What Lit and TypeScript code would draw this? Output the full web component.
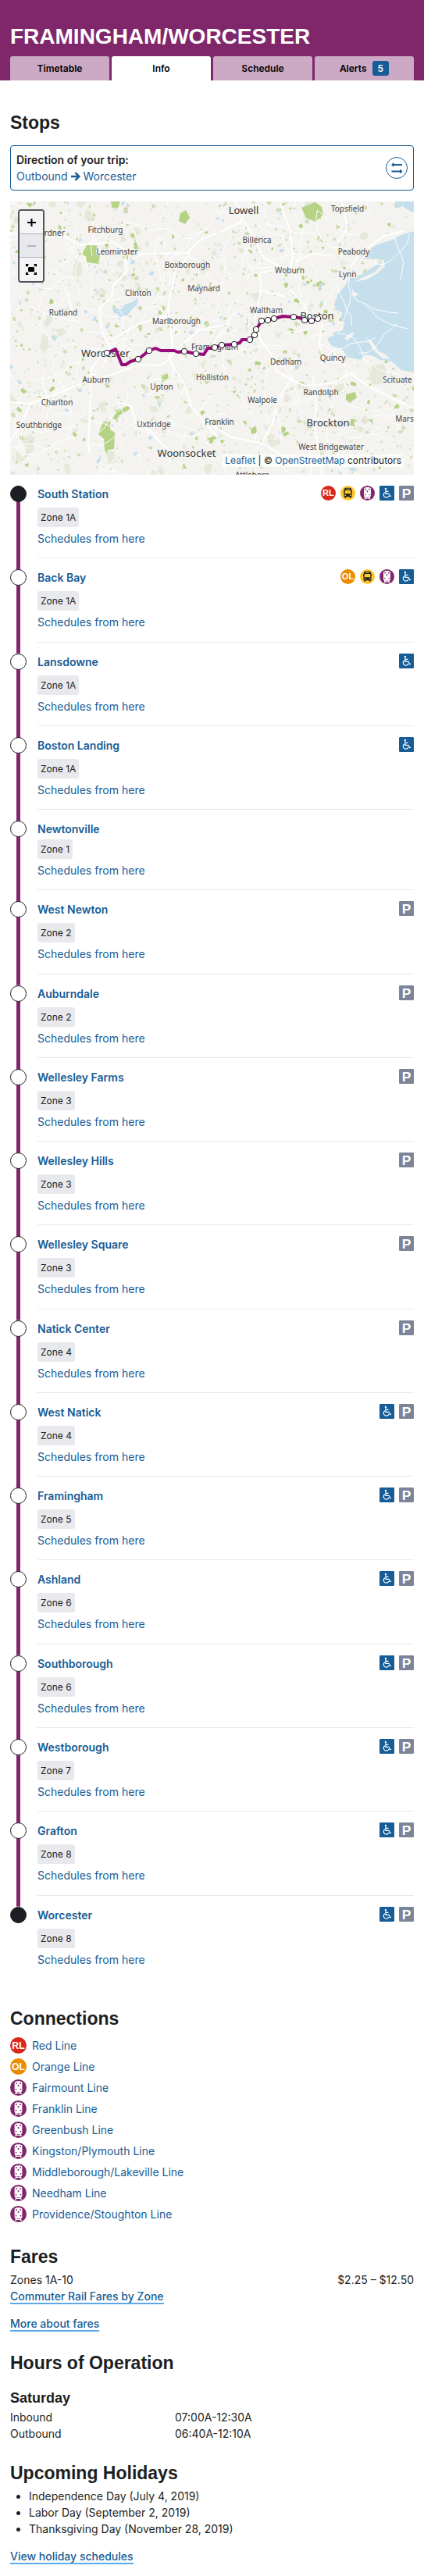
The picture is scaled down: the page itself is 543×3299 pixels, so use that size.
import { LitElement, html, svg, css } from "lit";
import { customElement } from "lit/decorators.js";

type Icon = "RL" | "OL" | "bus" | "cr" | "access" | "parking";

const stops: { name: string; zone: string; icons: Icon[] }[] = [
  { name: "South Station", zone: "1A", icons: ["RL", "bus", "cr", "access", "parking"] },
  { name: "Back Bay", zone: "1A", icons: ["OL", "bus", "cr", "access"] },
  { name: "Lansdowne", zone: "1A", icons: ["access"] },
  { name: "Boston Landing", zone: "1A", icons: ["access"] },
  { name: "Newtonville", zone: "1", icons: [] },
  { name: "West Newton", zone: "2", icons: ["parking"] },
  { name: "Auburndale", zone: "2", icons: ["parking"] },
  { name: "Wellesley Farms", zone: "3", icons: ["parking"] },
  { name: "Wellesley Hills", zone: "3", icons: ["parking"] },
  { name: "Wellesley Square", zone: "3", icons: ["parking"] },
  { name: "Natick Center", zone: "4", icons: ["parking"] },
  { name: "West Natick", zone: "4", icons: ["access", "parking"] },
  { name: "Framingham", zone: "5", icons: ["access", "parking"] },
  { name: "Ashland", zone: "6", icons: ["access", "parking"] },
  { name: "Southborough", zone: "6", icons: ["access", "parking"] },
  { name: "Westborough", zone: "7", icons: ["access", "parking"] },
  { name: "Grafton", zone: "8", icons: ["access", "parking"] },
  { name: "Worcester", zone: "8", icons: ["access", "parking"] },
];

const connections: [Icon, string][] = [
  ["RL", "Red Line"],
  ["OL", "Orange Line"],
  ["cr", "Fairmount Line"],
  ["cr", "Franklin Line"],
  ["cr", "Greenbush Line"],
  ["cr", "Kingston/Plymouth Line"],
  ["cr", "Middleborough/Lakeville Line"],
  ["cr", "Needham Line"],
  ["cr", "Providence/Stoughton Line"],
];

const iconLabels: Record<Icon, string> = {
  RL: "Red Line",
  OL: "Orange Line",
  bus: "Bus",
  cr: "Commuter Rail",
  access: "Accessible",
  parking: "Parking",
};

const iconArt = {
  RL: svg`<circle cx="12" cy="12" r="12" fill="#da291c"/><text x="12" y="17" class="letters">RL</text>`,
  OL: svg`<circle cx="12" cy="12" r="12" fill="#ed8b00"/><text x="12" y="17" class="letters">OL</text>`,
  bus: svg`<circle cx="12" cy="12" r="12" fill="#ffc72c"/>
    <path fill="#1c1e23" fill-rule="evenodd" d="M9 3.500h6c1.600 0 2.400.8 2.700 2.300l.3 1.700.9.500v3.500h-.7l.2 2.500v4h-1.200V20h-2.400v-2H9.200v2H6.800v-2H5.600v-4l.2-2.500h-.7V8l.9-.5.3-1.700C6.600 4.300 7.400 3.500 9 3.500zM9 4.800v1.100h6V4.800zM7.300 7.600 6.900 13h10.200l-.4-5.400zM6.700 14.700v1.600h2.300v-1.600zM15 14.700v1.600h2.300v-1.600z"/>`,
  cr: svg`<circle cx="12" cy="12" r="12" fill="#80276c"/>
    <path fill="#fff" fill-rule="evenodd" d="M9 2.600h6l.6.9h1.200l.8 1.200v12l-1.200 1.800h-.8l1.700 3.200h-1.900l-.5-1H9.100l-.5 1H6.700l1.700-3.200h-.8l-1.200-1.800v-12l.8-1.200h1.200zM8.100 4.800v2h1.900v-2zM14 4.800v2h1.900v-2zM12 7.600l-1.500 1.400L12 10.700l1.500-1.700zM7.700 13.800v1.700h1.700v-1.700zM14.600 13.800v1.700h1.700v-1.700zM10 18.500l-.4.900h4.800l-.4-.9z"/>`,
  access: svg`<rect width="24" height="24" rx="1.500" fill="#165c96"/>
    <circle cx="10" cy="5" r="1.500" fill="#fff"/>
    <path d="M10 6.500v6.500h5.200l2 4.400 1.700-.9M10.200 9.300h4.300M8.800 11a4.400 4.400 0 1 0 6.300 5.500" fill="none" stroke="#fff" stroke-width="1.500"/>`,
  parking: svg`<rect width="24" height="24" rx="1.500" fill="#7c8498"/><text x="12" y="20" class="park">P</text>`,
};

const icon = (name: Icon) =>
  html`<svg class="icon" viewBox="0 0 24 24" role="img" aria-label=${iconLabels[name]}>${iconArt[name]}</svg>`;

/* Basemap: land cover patches are scattered from a fixed seed so that every render is the same. */
const seeded = (seed: number) => () => {
  seed = (seed * 1664525 + 1013904223) % 4294967296;
  return seed / 4294967296;
};

const patches = (seed: number, count: number, min: number, max: number) => {
  const rnd = seeded(seed);
  let d = "";
  for (let i = 0; i < count; i++) {
    const x = rnd() * 517;
    const y = rnd() * 350;
    const r = min + rnd() * rnd() * (max - min);
    const n = 7;
    for (let k = 0; k < n; k++) {
      const a = (k / n) * Math.PI * 2;
      const q = r * (0.4 + rnd());
      d += `${k ? "L" : "M"}${(x + Math.cos(a) * q).toFixed(1)} ${(y + Math.sin(a) * q).toFixed(1)}`;
    }
    d += "Z";
  }
  return d;
};

const lanes = (seed: number, count: number) => {
  const rnd = seeded(seed);
  let d = "";
  for (let i = 0; i < count; i++) {
    let x = rnd() * 517;
    let y = rnd() * 350;
    let a = rnd() * 6.28;
    d += `M${x.toFixed(1)} ${y.toFixed(1)}`;
    for (let k = 0; k < 6; k++) {
      a += (rnd() - 0.5) * 1.1;
      x += Math.cos(a) * 11;
      y += Math.sin(a) * 11;
      d += `L${x.toFixed(1)} ${y.toFixed(1)}`;
    }
  }
  return d;
};

const towns: [string, number, number][] = [
  ["ardner", 54, 44], ["Fitchburg", 122, 40], ["Leominster", 137, 68], ["Boxborough", 227, 85],
  ["Clinton", 164, 121], ["Maynard", 248, 115], ["Rutland", 68, 146], ["Marlborough", 213, 157],
  ["Framingham", 262, 190], ["Auburn", 110, 232], ["Upton", 194, 241], ["Holliston", 259, 229],
  ["Charlton", 60, 261], ["Southbridge", 37, 290], ["Uxbridge", 184, 289], ["Franklin", 268, 286],
  ["Billerica", 316, 53], ["Topsfield", 432, 13], ["Peabody", 440, 68], ["Lynn", 432, 97],
  ["Woburn", 358, 92], ["Waltham", 328, 143], ["Dedham", 353, 209], ["Quincy", 413, 204],
  ["Scituate", 496, 232], ["Randolph", 398, 248], ["Walpole", 323, 258], ["Mars", 505, 282],
  ["West Bridgewater", 411, 318], ["Attleboro", 310, 354],
];
const cities: [string, number, number][] = [
  ["Lowell", 299, 16], ["Worcester", 122, 199], ["Boston", 393, 151],
  ["Woonsocket", 226, 327], ["Brockton", 407, 288],
];
const pins = [
  [124, 194], [164, 202], [178, 191], [223, 192], [238, 195], [262, 187], [271, 184], [287, 183],
  [307, 177], [313, 171], [315, 164], [322, 153], [330, 152], [338, 150], [363, 148], [377, 152],
  [386, 153], [394, 150],
];

const basemap = svg`
  <rect width="517" height="350" fill="#f4f3f0"/>
  <path d=${patches(9, 190, 2, 9)} fill="#e6e9da"/>
  <path d=${patches(31, 520, 0.8, 4)} fill="#cfdcb5"/>
  <path d=${patches(7, 300, 0.8, 5)} fill="#b6d285"/>
  <path d=${patches(77, 300, 0.6, 3.5)} fill="#c6dfed"/>
  <path d=${patches(55, 50, 1, 4)} fill="#efe6d2"/>
  <g fill="#b6d285">
    <path d="M98 55l14 2-2 8 5 3-2 12-15-2-1-8-6-2z"/>
    <path d="M129 0h12l-3 9-8-2zM218 15l7-4 5 9-6 9-8-4zM373 8l18-7 8 6 2 10-10 9-12-5z"/>
    <path d="M119 282h9v10l6 4-1 21-12 2-1-15-7-6z"/>
    <path d="M134 268l19-7v5l-15 9zM193 223l8-4 2 7-8 6zM308 291l8-4 1 9-8 2zM430 247l12-3 2 7-9 7-5-4z"/>
  </g>
  <g fill="#e4e9dc">
    <path d="M84 74l7 3 1 15-8 8-4-7zM41 170l7 2 1 14-6 9-5-8zM463 210l14-2 5 6v17l-16 4-6-8zM124 319l10 2 1 14-10 1z"/>
  </g>
  <path d="M163 123l-5 5-11 4-4 6-12-3 1 7 7 3v7l5-5 6-1 7-9 6-5z" fill="#c6dfed"/>
  <path d="M517 38l-19 6-8 5-20 6-14 9-3 10 15-1 10 3-18 11-12 8-14 3-5 10-9 10-5 14 3 7 7 3-2 8 5 5-2 10-14 3-6 9 6 8 14 5 6 9 17 4 5-7 11 2 9 5 15 2 12 11 18 3z" fill="#c6dfed"/>
  <path d="M493 0h24v14l-9-4-5-4-10 3z" fill="#c6dfed"/>
  <path d="M452 97l14-6 8-8 4-10 2 10-11 10-13 7-16 3zM436 101l3 14 8 4-8 3zM408 169l5-3 2 5-5 3zM418 162l8-3-5 9zM428 175l11-8 2 2-9 9zM456 174l8 6 8 12 9 4 6 6-10-1-12-11z" fill="#f4f3f0"/>
  <path d=${lanes(12, 150)} class="lane"/>
  <g class="road">
    <path d="M0 41l40 4 29-1 19 12 45-4 14 10 2 28-17 18-2 14-15 14 1 25 8 18 5 12-8 15"/>
    <path d="M137 68l45-1 45-1 18-18 20-7"/>
    <path d="M231 66l-20 25-4 20-5 25 4 30 2 20-5 14 7 14 12 18 10 30 20 25 14 15"/>
    <path d="M0 257l26 2 34-13 44-18 27-6 33-13 24 1 10-3 20-22 24-20 40-9"/>
    <path d="M26 259l-13 28-13 20M138 257l18 6 4 20 20 11 13 16 22 18"/>
    <path d="M118 195l-14 20-2 60-2 35 2 14M131 177l18-11 20-11 30-8"/>
    <path d="M270 39l29-15 16 28 10 20 18 10M296 30l2-16-10-14M345 0l14 38 3 35-4 12-38 6"/>
    <path d="M320 92l1 22-8 40 8 22 15 23 5 18 35 19 37-3 22-13 24 17 60 29 25 25"/>
    <path d="M388 224l4 40-2 22 10 64M362 225l-20 30-6 30-14 25M258 286l25 16 40 8 34 20 60 2M322 114l30 8M400 156l-4 25 5 21M386 158l-9-25-18-20M365 77l22-10 26 3M436 84l14-20 30-20 25-6M425 0l7 34-12 18"/>
  </g>
  <g class="town">${towns.map(([t, x, y]) => svg`<text x=${x} y=${y}>${t}</text>`)}</g>
  <g class="city">${cities.map(([t, x, y]) => svg`<text x=${x} y=${y}>${t}</text>`)}</g>
  <path class="route" d="M124 194 135 189 143 209H148L154 205 164 202 178 191 186 188 193 191H210L215 193 223 192 238 195 248 196 253 188H259L271 184 287 183 294 181 297 177H307L313 171 315 164 322 153 330 152 338 150 349 147 363 148 371 149 377 152 386 153 394 150"/>
  ${pins.map(([x, y]) => svg`<circle class="pin" cx=${x} cy=${y} r="3.700"/>`)}
`;

@customElement("app-root")
export class AppRoot extends LitElement {
  static styles = css`
    :host { display: block; background: #fff; color: #1c1e23; font: 14px/21px Inter, sans-serif; }
    * { box-sizing: border-box; }
    h1, h2, h3, p, ul, ol, dl, dd { margin: 0; padding: 0; }
    h1, h2, h3 { font-family: "Liberation Sans", Arial, sans-serif; font-weight: 700; }
    ol, ul { list-style: none; }
    a { color: #165c96; text-decoration: none; }
    svg { display: block; }

    .header { background: #80276c; padding: 30px 13px 0; }
    .title { color: #fff; font-size: 28px; line-height: 34px; text-transform: uppercase; }
    .tabs { display: grid; grid-template-columns: repeat(4, 1fr); gap: 3px; margin-top: 8px; }
    .tab { display: flex; align-items: center; justify-content: center; gap: 7px; height: 31px; border-radius: 3px 3px 0 0; background: #cca9c4; color: #000; font-size: 12px; font-weight: 600; }
    .tab.current { background: #fff; }
    .count { background: #165c96; color: #fff; border-radius: 3px; padding: 0 7px; line-height: 19px; }

    main { padding: 40px 13px 14px; }
    h2 { font-size: 23px; line-height: 28px; }
    .direction { display: flex; width: 100%; align-items: center; justify-content: space-between; margin-top: 15px; padding: 7px; border: 1px solid #165c96; border-radius: 4px; background: #fff; font: inherit; color: #165c96; text-align: left; }
    .direction strong { display: block; color: #1c1e23; font-weight: 600; }
    .arrow { display: inline-block; width: 12px; height: 12px; vertical-align: -1px; }
    .swap { width: 28px; height: 28px; }

    .map { position: relative; height: 350px; margin: 14px 0; overflow: hidden; }
    .canvas { width: 100%; height: 100%; }
    .lane { fill: none; stroke: #fff; stroke-width: 1; }
    .road path { fill: none; stroke: #fff; stroke-width: 2; stroke-linejoin: round; }
    .town, .city { font-family: "Noto Sans", sans-serif; text-anchor: middle; fill: #444; stroke: #f4f3f0; stroke-width: 2; paint-order: stroke; }
    .town { font-size: 10px; }
    .city { font-size: 13px; fill: #333; }
    .route { fill: none; stroke: #970c78; stroke-width: 4; stroke-linejoin: round; }
    .pin { fill: #fff; stroke: #1c1e23; stroke-width: 1; }
    .zoom { position: absolute; top: 10px; left: 10px; width: 34px; border: 2px solid #555459; border-radius: 4px; overflow: hidden; }
    .zoom button { display: flex; align-items: center; justify-content: center; width: 100%; height: 30px; padding: 0; border: 0; border-bottom: 1px solid #b0b5c0; background: #f4f4f7; color: #000; }
    .zoom button:last-child { border-bottom: 0; }
    .zoom button:disabled { background: #e8e9ed; color: #b0b5c0; }
    .zoom svg { width: 16px; height: 16px; }
    .credit { position: absolute; right: 13px; bottom: 10px; padding: 0 3px; background: #ffffffb3; font-size: 12px; line-height: 16px; }

    .stop { display: grid; grid-template-columns: 21px 1fr; column-gap: 14px; }
    .track { display: flex; justify-content: center; background: linear-gradient(#80276c, #80276c) center / 5px 100% no-repeat; }
    .stop:last-child .track { background: none; }
    .dot { width: 21px; height: 21px; border: 1px solid #1c1e23; border-radius: 50%; background: #fff; }
    .stop:first-child .dot, .stop:last-child .dot { background: #1c1e23; }
    .detail { padding-bottom: 14px; margin-bottom: 14px; border-bottom: 1px solid #e8e9ed; }
    .stop:last-child .detail { margin-bottom: 11px; border-bottom: 0; }
    .heading { display: flex; justify-content: space-between; }
    .heading a { font-weight: 600; }
    .icons { display: flex; gap: 6px; }
    .icons:not(:empty) { height: 25px; }
    .icons .icon { width: 19px; height: 19px; }
    .icon .letters { font: 700 14px "Liberation Sans", sans-serif; fill: #fff; text-anchor: middle; }
    .icon .park { font: 700 22px "Liberation Sans", sans-serif; fill: #fff; text-anchor: middle; }
    .zone { display: block; width: fit-content; margin: 3px 0 4px; padding: 0 4px; border-radius: 3px; background: #e8e9ed; font-size: 12px; line-height: 25px; }
    .schedule { display: block; line-height: 1.52; }

    .section { margin-top: 26px; }
    .connections { display: grid; gap: 6px; padding: 10px 0 4px; }
    .connections li { display: flex; gap: 7px; }
    .connections .icon { width: 21px; height: 21px; }
    .fare { display: flex; justify-content: space-between; margin-top: 5px; }
    .more { border-bottom: 2px solid #5da9e8; font-weight: 500; }
    .gap { margin-top: 14px; }
    h3 { margin: 20px 0 3px; font-size: 18px; line-height: 22px; }
    .hours { display: grid; grid-template-columns: 211px 1fr; }
    .holidays { margin-top: 5px; list-style: disc; padding-left: 24px; }
  `;

  render() {
    return html`
      <header class="header">
        <h1 class="title">Framingham/Worcester</h1>
        <nav class="tabs">
          <a class="tab" href="#timetable">Timetable</a>
          <a class="tab current" href="#info" aria-current="page">Info</a>
          <a class="tab" href="#schedule">Schedule</a>
          <a class="tab" href="#alerts">Alerts <span class="count">5</span></a>
        </nav>
      </header>
      <main>
        <h2>Stops</h2>
        <button class="direction">
          <span><strong>Direction of your trip:</strong>Outbound
            <svg class="arrow" viewBox="0 0 12 12"><path d="M0 6h10M5.500 1.200 10.300 6 5.500 10.800" fill="none" stroke="#165c96" stroke-width="2.400"/></svg>
            Worcester</span>
          <svg class="swap" viewBox="0 0 28 28" fill="none" stroke="#165c96">
            <circle cx="14" cy="14" r="13.500"/>
            <path d="M8 10h13M7.500 18.500h13" stroke-width="2"/>
            <path d="M7 10l3.500-3v6zM21.500 18.500l-3.500-3v6z" fill="#165c96" stroke="none"/>
          </svg>
        </button>
        <div class="map">
          <svg class="canvas" viewBox="0 0 517 350" preserveAspectRatio="xMidYMid slice" role="img" aria-label="Framingham/Worcester route map">${basemap}</svg>
          <div class="zoom">
            <button aria-label="Zoom in"><svg viewBox="0 0 16 16"><path d="M3 8h11M8.500 3v10" stroke="currentColor" stroke-width="2"/></svg></button>
            <button aria-label="Zoom out" disabled><svg viewBox="0 0 16 16"><path d="M3 8h11" stroke="currentColor" stroke-width="2"/></svg></button>
            <button aria-label="Reset view"><svg viewBox="0 0 16 16"><rect x="4" y="5" width="8" height="6" rx="1.500"/><path d="M1 1h4L1 5zM15 1h-4l4 4zM1 15h4l-4-4zM15 15h-4l4-4z"/><path d="M2 2l2 2M14 2l-2 2M2 14l2-2M14 14l-2-2" stroke="#000" stroke-width="1.500"/></svg></button>
          </div>
          <div class="credit"><a href="#leaflet">Leaflet</a> | © <a href="#osm">OpenStreetMap</a> contributors</div>
        </div>
        <ol>
          ${stops.map((s) => html`
            <li class="stop">
              <div class="track"><span class="dot"></span></div>
              <div class="detail">
                <div class="heading"><a href="#stop">${s.name}</a><span class="icons">${s.icons.length ? s.icons.map(icon) : null}</span></div>
                <span class="zone">Zone ${s.zone}</span>
                <a class="schedule" href="#schedules">Schedules from here</a>
              </div>
            </li>`)}
        </ol>
        <section class="section">
          <h2>Connections</h2>
          <ul class="connections">
            ${connections.map(([i, name]) => html`<li>${icon(i)}<a href="#line">${name}</a></li>`)}
          </ul>
        </section>
        <section class="section">
          <h2>Fares</h2>
          <p class="fare"><span>Zones 1A-10</span><span>$2.25 – $12.50</span></p>
          <p><a class="more" href="#zones">Commuter Rail Fares by Zone</a></p>
          <p class="gap"><a class="more" href="#fares">More about fares</a></p>
        </section>
        <section class="section">
          <h2>Hours of Operation</h2>
          <h3>Saturday</h3>
          <dl class="hours"><dt>Inbound</dt><dd>07:00A-12:30A</dd><dt>Outbound</dt><dd>06:40A-12:10A</dd></dl>
        </section>
        <section class="section">
          <h2>Upcoming Holidays</h2>
          <ul class="holidays">
            <li>Independence Day (July 4, 2019)</li>
            <li>Labor Day (September 2, 2019)</li>
            <li>Thanksgiving Day (November 28, 2019)</li>
          </ul>
          <p class="gap"><a class="more" href="#holidays">View holiday schedules</a></p>
        </section>
      </main>
    `;
  }
}
